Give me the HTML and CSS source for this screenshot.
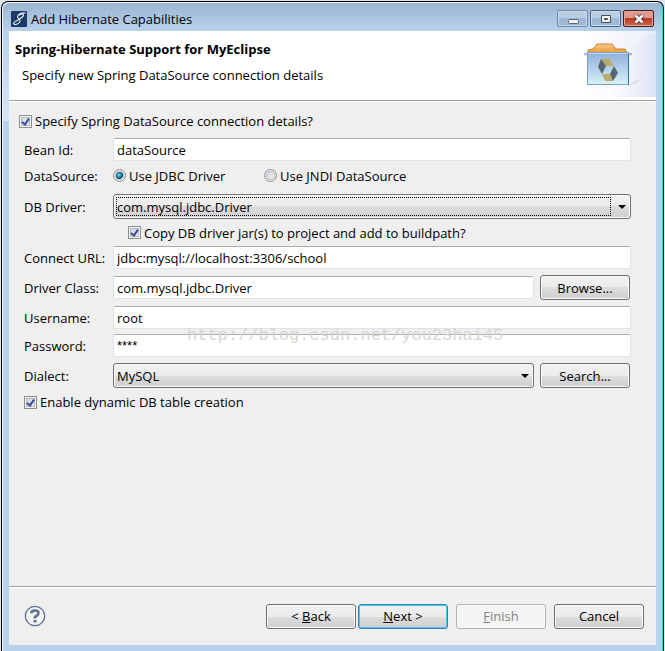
FILE: index.html
```html
<!DOCTYPE html>
<html lang="en">
<head>
<meta charset="utf-8">
<title>Add Hibernate Capabilities</title>
<link rel="stylesheet" href="styles.css">
</head>
<body>
<div class="window">
  <header class="titlebar">
    <svg class="app-icon" viewBox="0 0 16 16" aria-hidden="true">
      <rect width="16" height="16" rx="1" fill="#1c3a66"/>
      <path d="M14.500 2C11 1.500 7 3 6.500 5.500C6.300 7.500 9.500 8 9 10.500C8.500 13 3 14.500 2.500 12.500C2.500 10 11 8 12.500 4.500C13 2.500 9.500 2.500 8.500 4.500" fill="none" stroke="#e8f0f8" stroke-width="1.100"/>
    </svg>
    <h1 class="window-title">Add Hibernate Capabilities</h1>
    <div class="window-buttons">
      <button type="button" class="win-btn" aria-label="Minimize">
        <svg viewBox="0 0 12 12"><rect x="1.500" y="6.500" width="10" height="4" rx="1" fill="#f4f4f4" stroke="#596273"/></svg>
      </button>
      <button type="button" class="win-btn win-max" aria-label="Maximize">
        <svg viewBox="0 0 12 12"><path d="M1.500 2.500h9v7h-9z" fill="#f4f4f4" stroke="#454d5e"/><path d="M4.500 5.500h3v1h-3z" fill="#8fb0d0" stroke="#454d5e"/></svg>
      </button>
      <button type="button" class="win-btn win-close" aria-label="Close">
        <svg viewBox="0 0 12 12"><path d="M2.500 2.500l7 7M9.500 2.500l-7 7" stroke="#4b3440" stroke-width="4.500"/><path d="M2.500 2.500l7 7M9.500 2.500l-7 7" stroke="#f6f4f4" stroke-width="2.600"/></svg>
      </button>
    </div>
  </header>
  <main class="dialog">
    <section class="banner">
      <div class="banner-text">
        <h2 class="banner-title">Spring-Hibernate Support for MyEclipse</h2>
        <p class="banner-message">Specify new Spring DataSource connection details</p>
      </div>
      <svg class="banner-art" viewBox="0 0 75 66" aria-hidden="true">
        <defs>
          <linearGradient id="glow" x1="0" y1="0" x2="1" y2="0"><stop offset="0" stop-color="#fff"/><stop offset="1" stop-color="#dfe5f6"/></linearGradient>
          <linearGradient id="box" x1="0" y1="0" x2="0" y2="1"><stop offset="0" stop-color="#8fb0dc"/><stop offset="1" stop-color="#d6f1f6"/></linearGradient>
          <linearGradient id="folder" x1="0" y1="0" x2="0" y2="1"><stop offset="0" stop-color="#fbc88a"/><stop offset="1" stop-color="#ec9c35"/></linearGradient>
          <linearGradient id="shade" x1="0" y1="0" x2="1" y2="0"><stop offset="0" stop-color="#c5c5d6"/><stop offset="1" stop-color="#e6e9f6"/></linearGradient>
        </defs>
        <path d="M0 0H75V66H0z" fill="url(#glow)" opacity=".6"/>
        <path d="M39 32C50 15 60 4 75 1V66H25z" fill="url(#glow)"/>
        <path d="M48 54L62 46Q58 52 48 54z" fill="url(#shade)"/>
        <path d="M7 22V19l5-1 4-5h15l4 5h9l2 4z" fill="url(#folder)" stroke="#c68432"/>
        <path d="M3 23h4M47 23h4" stroke="#b4bac4" stroke-width="2.500"/>
        <path d="M6.500 21.500h41v32h-41z" fill="url(#box)" stroke="#7fa0c0"/>
        <path d="M7 22.500h40" stroke="#c4d8ee"/>
        <path d="M47.500 23v31" stroke="#2e6f9a"/>
        <path d="M20 28h9l4 7h-8z" fill="#bba970"/>
        <path d="M21 43h8l3 7h-8z" fill="#bba970"/>
        <path d="M20 28l5 7-4 8-4-7z" fill="#59656d"/>
        <path d="M33 35l4 7-5 8-3-7z" fill="#59656d"/>
      </svg>
    </section>
    <form class="form">
      <label class="check-line"><input type="checkbox" class="check" checked>Specify Spring DataSource connection details?</label>
      <div class="fields">
        <div class="row"><label for="bean">Bean Id:</label><input id="bean" class="text" type="text" value="dataSource"></div>
        <div class="row row-radio"><span>DataSource:</span>
          <div class="radios">
            <label><input type="radio" class="radio" name="source" checked>Use JDBC Driver</label>
            <label><input type="radio" class="radio" name="source">Use JNDI DataSource</label>
          </div>
        </div>
        <div class="row row-combo"><label for="driver">DB Driver:</label>
          <div class="combo focused"><select id="driver"><option>com.mysql.jdbc.Driver</option></select></div>
        </div>
        <label class="check-line copy-line"><input type="checkbox" class="check" checked>Copy DB driver jar(s) to project and add to buildpath?</label>
        <div class="row"><label for="url">Connect URL:</label><input id="url" class="text" type="text" value="jdbc:mysql://localhost:3306/school"></div>
        <div class="row row-action"><label for="class">Driver Class:</label><input id="class" class="text" type="text" value="com.mysql.jdbc.Driver"><button type="button" class="btn">Browse...</button></div>
        <div class="row"><label for="user">Username:</label><input id="user" class="text" type="text" value="root"></div>
        <div class="row row-password"><label for="password">Password:</label><input id="password" class="text masked" type="text" value="****" autocomplete="off">
          <span class="watermark">http://blog.csdn.net/you23hai45</span>
        </div>
        <div class="row row-action"><label for="dialect">Dialect:</label>
          <div class="combo"><select id="dialect"><option>MySQL</option></select></div>
          <button type="button" class="btn">Search...</button>
        </div>
      </div>
      <label class="check-line enable-line"><input type="checkbox" class="check" checked>Enable dynamic DB table creation</label>
    </form>
    <footer class="footer">
      <button type="button" class="help" aria-label="Help">
        <svg viewBox="0 0 22 22"><circle cx="11" cy="11" r="9.700" fill="#f3f4f6" stroke="#5b7194" stroke-width="1.300"/><path d="M7.300 8.300Q7.300 5.500 11 5.500T14.500 8.300Q14.500 10 12.500 11T11 13.500" fill="none" stroke="#5b7194" stroke-width="2.600"/><path d="M9.500 15h3v2.500h-3z" fill="#5b7194"/></svg>
      </button>
      <button type="button" class="btn">&lt; <u>B</u>ack</button>
      <button type="button" class="btn btn-default"><u>N</u>ext &gt;</button>
      <button type="button" class="btn btn-spaced" disabled><u>F</u>inish</button>
      <button type="button" class="btn btn-spaced">Cancel</button>
    </footer>
  </main>
</div>
</body>
</html>
```
FILE: styles.css
```css
*,
*::before,
*::after {
  box-sizing: border-box;
}

body {
  margin: 0;
  padding: 1px 1px 0;
  background: #dfe5ec;
  color: #000;
  font: 13px/18px "Open Sans", "Noto Sans", sans-serif;
}

h1,
h2,
p {
  margin: 0;
  font-size: 13px;
}

button,
input,
select {
  font: inherit;
  color: inherit;
}

.window {
  display: flex;
  flex-direction: column;
  min-height: calc(100vh - 1px);
  padding: 0 6px 6px;
  border: 1px solid #000;
  border-bottom: 0;
  border-radius: 7px 7px 0 0;
  background:
    linear-gradient(#b9d1ea, #d6e6f6) 0 29px / 7px 90px no-repeat,
    linear-gradient(#9ab4d0, #b9d1ea 29px);
  box-shadow: inset 1px 1px #eef5fb, inset -1px 0 #2ed0f4;
}

.titlebar {
  display: flex;
  align-items: center;
  height: 29px;
  padding: 4px 3px 0 3px;
}

.app-icon {
  width: 16px;
  height: 16px;
}

.window-title {
  flex: 1;
  padding-left: 4px;
  font-weight: 400;
}

.window-buttons {
  display: flex;
  gap: 2px;
}

.win-btn {
  display: grid;
  place-items: center;
  width: 31px;
  height: 17px;
  padding: 0;
  border: 1px solid #7089a8;
  border-radius: 2px;
  background: linear-gradient(#b9cee5 50%, #9db9d6 50%);
  box-shadow: inset 0 0 0 1px #c8daec;
}

.win-btn svg {
  width: 12px;
  height: 12px;
}

.win-max {
  border-color: #4b627f;
}

.win-close {
  border-color: #431b20;
  background: linear-gradient(#dd9a8d 50%, #b93a25 50%, #cf6a4e);
  box-shadow: inset 0 0 0 1px #e1a79b;
}

.dialog {
  display: flex;
  flex: 1;
  flex-direction: column;
  margin: 0 1px;
  background: #efefef;
}

.banner {
  display: flex;
  justify-content: space-between;
  height: 70px;
  border-bottom: 1px solid #9f9f9f;
  background: #fff;
}

.banner-text {
  padding: 9px 0 0 6px;
}

.banner-title {
  font-weight: 700;
}

.banner-message {
  padding: 8px 0 0 7px;
}

.banner-art {
  width: 75px;
  height: 66px;
}

.form {
  flex: 1;
  padding: 10px 25px 0 10px;
  border-top: 1px solid #fff;
}

.check-line,
.radios label {
  display: flex;
  align-items: center;
  height: 18px;
}

.fields {
  display: grid;
  gap: 7px;
  padding: 8px 0 0 5px;
}

.row {
  display: flex;
  align-items: center;
  height: 23px;
}

.row > :first-child {
  width: 89px;
}

.row-radio {
  height: 15px;
}

.row-combo {
  height: 33px;
}

.row-password {
  position: relative;
  margin-top: -2px;
}

.radios {
  display: flex;
}

.radios label {
  width: 151px;
  white-space: nowrap;
}

.text {
  flex: 1;
  min-width: 0;
  height: 23px;
  padding: 0 3px;
  border: 1px solid #dce3ec;
  border-top-color: #abadb3;
  border-radius: 2px;
  background: #fff;
}

.masked {
  font-family: "Liberation Sans", sans-serif;
}

.check,
.radio {
  appearance: none;
  flex: none;
  width: 13px;
  height: 13px;
  margin: 0 3px 0 0;
  border: 1px solid #8e8f8f;
  box-shadow: inset 0 0 0 1px #f4f4f4, inset 0 0 0 2px #b4bac2;
  background: linear-gradient(135deg, #cbcfd5, #f6f6f6);
}

.check:checked::before {
  content: "";
  display: block;
  width: 5px;
  height: 8px;
  margin: 1px 0 0 3px;
  border: solid #364f98;
  border-width: 0 2px 2px 0;
  transform: rotate(35deg);
}

.radio {
  border-radius: 50%;
}

.radio:checked {
  background: radial-gradient(circle at 5px 5px, #78e0fc, #11618c 3px, #0c3c5c 4px, #e4e8ec 4px);
}

.copy-line {
  height: 9px;
  padding: 0 0 4px 104px;
}

.combo {
  position: relative;
  flex: 1;
  min-width: 0;
  height: 25px;
}

.combo select {
  appearance: none;
  width: 100%;
  height: 100%;
  padding: 0 20px 0 3px;
}

.combo select,
.btn {
  border: 1px solid #707070;
  border-radius: 3px;
  background: linear-gradient(#f2f2f2, #ebebeb 50%, #dddddd 50%, #cfcfcf);
  box-shadow: inset 0 0 0 1px #fafafa;
}

.combo::after {
  content: "";
  position: absolute;
  top: 11px;
  right: 5px;
  border: solid transparent;
  border-width: 4px 4px 0;
  border-top-color: #000;
}

.focused::before {
  content: "";
  position: absolute;
  inset: 3px 20px 3px 3px;
  border: 1px dotted #000;
}

.btn {
  width: 90px;
  height: 25px;
  padding: 0;
}

.row .btn {
  margin: 0 1px 0 6px;
}

.btn:disabled {
  border-color: #adb2b5;
  background: #f4f4f4;
  color: #838383;
}

.btn-default {
  margin-left: 2px;
  border-color: #3c7fb1;
  box-shadow: inset 0 0 0 1px #48c8f0;
}

.btn-spaced {
  margin-left: 8px;
}

.watermark {
  position: absolute;
  left: 163px;
  bottom: 9px;
  font: 17px/24px "Liberation Mono", monospace;
  color: #d6d6d0;
  pointer-events: none;
}

.enable-line {
  margin-top: 6px;
  padding-left: 5px;
}

.footer {
  display: flex;
  align-items: center;
  height: 59px;
  padding: 0 12px 0 15px;
  border-top: 1px solid #a0a0a0;
  box-shadow: inset 0 1px #fff;
}

.help {
  width: 22px;
  height: 22px;
  margin-right: auto;
  padding: 0;
  border: 0;
  background: none;
}

.help svg {
  display: block;
}
```
